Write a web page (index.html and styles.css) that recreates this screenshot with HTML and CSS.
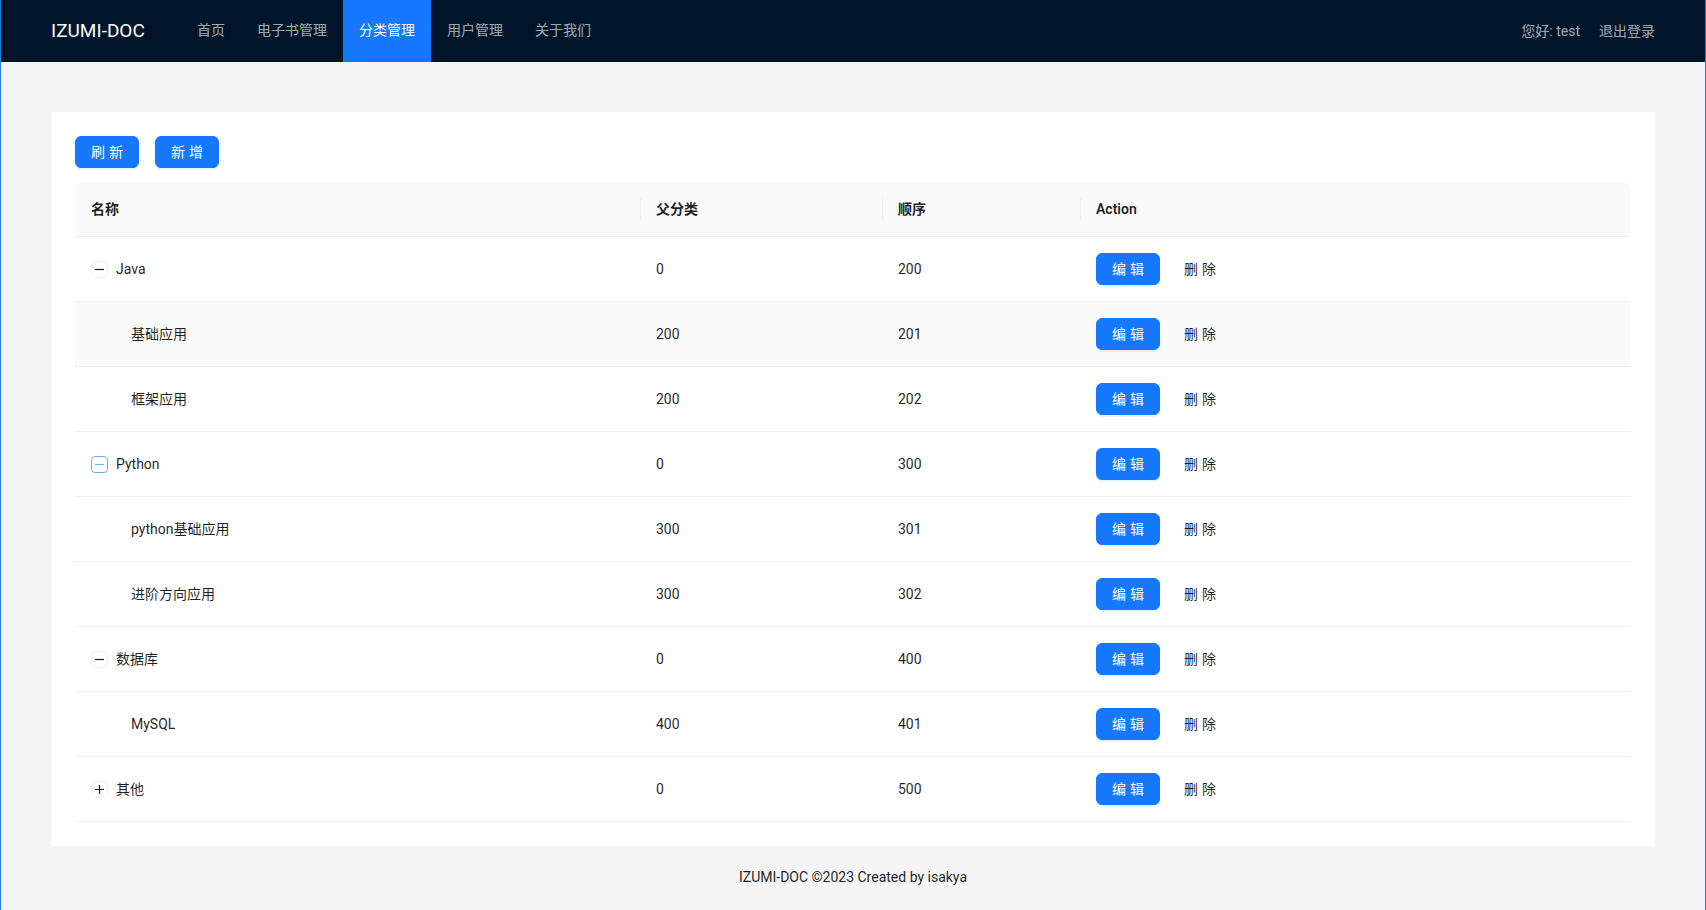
FILE: index.html
```html
<!DOCTYPE html>
<html lang="zh-CN">
<head>
<meta charset="utf-8">
<title>IZUMI-DOC</title>
<link rel="stylesheet" href="styles.css">
</head>
<body>
<div class="app">
  <header class="header">
    <div class="logo">IZUMI-DOC</div>
    <nav class="menu">
      <a class="menu-item">首页</a>
      <a class="menu-item">电子书管理</a>
      <a class="menu-item active">分类管理</a>
      <a class="menu-item">用户管理</a>
      <a class="menu-item">关于我们</a>
    </nav>
    <div class="user">
      <span>您好: test</span>
      <a class="logout">退出登录</a>
    </div>
  </header>

  <main class="content">
    <div class="card">
      <div class="toolbar">
        <button class="btn btn-primary"><span class="two">刷新</span></button>
        <button class="btn btn-primary"><span class="two">新增</span></button>
      </div>
      <table class="table">
        <colgroup>
          <col class="c-name"><col class="c-parent"><col class="c-sort"><col>
        </colgroup>
        <thead>
          <tr><th>名称</th><th class="sep">父分类</th><th class="sep">顺序</th><th class="sep">Action</th></tr>
        </thead>
        <tbody>
          <tr>
            <td><div class="name"><span class="expand"><svg width="15" height="15" viewBox="0 0 15 15"><path d="M3 7.5h9" stroke="currentColor" stroke-width="1.2"/></svg></span>Java</div></td>
            <td>0</td><td>200</td>
            <td><div class="actions"><button class="btn btn-primary"><span class="two">编辑</span></button><button class="btn btn-text"><span class="two">删除</span></button></div></td>
          </tr>
          <tr class="hover">
            <td><div class="name child">基础应用</div></td>
            <td>200</td><td>201</td>
            <td><div class="actions"><button class="btn btn-primary"><span class="two">编辑</span></button><button class="btn btn-text"><span class="two">删除</span></button></div></td>
          </tr>
          <tr>
            <td><div class="name child">框架应用</div></td>
            <td>200</td><td>202</td>
            <td><div class="actions"><button class="btn btn-primary"><span class="two">编辑</span></button><button class="btn btn-text"><span class="two">删除</span></button></div></td>
          </tr>
          <tr>
            <td><div class="name"><span class="expand focus"><svg width="15" height="15" viewBox="0 0 15 15"><path d="M3 7.5h9" stroke="currentColor" stroke-width="1.2"/></svg></span>Python</div></td>
            <td>0</td><td>300</td>
            <td><div class="actions"><button class="btn btn-primary"><span class="two">编辑</span></button><button class="btn btn-text"><span class="two">删除</span></button></div></td>
          </tr>
          <tr>
            <td><div class="name child">python基础应用</div></td>
            <td>300</td><td>301</td>
            <td><div class="actions"><button class="btn btn-primary"><span class="two">编辑</span></button><button class="btn btn-text"><span class="two">删除</span></button></div></td>
          </tr>
          <tr>
            <td><div class="name child">进阶方向应用</div></td>
            <td>300</td><td>302</td>
            <td><div class="actions"><button class="btn btn-primary"><span class="two">编辑</span></button><button class="btn btn-text"><span class="two">删除</span></button></div></td>
          </tr>
          <tr>
            <td><div class="name"><span class="expand"><svg width="15" height="15" viewBox="0 0 15 15"><path d="M3 7.5h9" stroke="currentColor" stroke-width="1.2"/></svg></span>数据库</div></td>
            <td>0</td><td>400</td>
            <td><div class="actions"><button class="btn btn-primary"><span class="two">编辑</span></button><button class="btn btn-text"><span class="two">删除</span></button></div></td>
          </tr>
          <tr>
            <td><div class="name child">MySQL</div></td>
            <td>400</td><td>401</td>
            <td><div class="actions"><button class="btn btn-primary"><span class="two">编辑</span></button><button class="btn btn-text"><span class="two">删除</span></button></div></td>
          </tr>
          <tr>
            <td><div class="name"><span class="expand"><svg width="15" height="15" viewBox="0 0 15 15"><path d="M3 7.5h9M7.5 3v9" stroke="currentColor" stroke-width="1.2"/></svg></span>其他</div></td>
            <td>0</td><td>500</td>
            <td><div class="actions"><button class="btn btn-primary"><span class="two">编辑</span></button><button class="btn btn-text"><span class="two">删除</span></button></div></td>
          </tr>
        </tbody>
      </table>
    </div>
  </main>

  <footer class="footer">IZUMI-DOC ©2023 Created by isakya</footer>
</div>
</body>
</html>
```

FILE: styles.css
```css
* { box-sizing: border-box; }
html, body { margin: 0; padding: 0; }
body {
  font-family: "Segoe UI", Roboto, "Noto Sans CJK SC", sans-serif;
  font-size: 14px;
  line-height: 22px;
  color: rgba(0, 0, 0, 0.88);
  background: #f4f4f4;
}
.app {
  min-height: 910px;
  border-left: 1px solid #1a82d8;
  border-right: 1px solid #1a82d8;
  background: #f4f4f4;
}

/* header */
.header {
  height: 62px;
  background: #001529;
  display: flex;
  align-items: center;
  padding: 0 50px;
}
.logo {
  width: 130px;
  color: #fff;
  font-size: 19px;
  line-height: 60px;
}
.menu { display: flex; height: 62px; }
.menu-item {
  display: block;
  padding: 0 16px 2px;
  line-height: 60px;
  color: rgba(255, 255, 255, 0.65);
  cursor: pointer;
}
.menu-item.active { background: #1677ff; color: #fff; }
.user {
  margin-left: auto;
  display: flex;
  gap: 19px;
  line-height: 60px;
  color: rgba(255, 255, 255, 0.65);
}
.logout { color: rgba(255, 255, 255, 0.65); cursor: pointer; }

/* content */
.content { padding: 50px 50px 0; }
.card {
  background: #fff;
  padding: 24px;
}
.toolbar {
  display: flex;
  gap: 16px;
  margin-bottom: 14px;
}

.btn {
  font-family: inherit;
  font-size: 14px;
  height: 32px;
  padding: 0 15px;
  border: 1px solid transparent;
  border-radius: 6px;
  line-height: 22px;
  cursor: pointer;
  display: inline-flex;
  align-items: center;
  justify-content: center;
}
.btn-primary {
  background: #1677ff;
  border-color: #1677ff;
  color: #fff;
  box-shadow: 0 2px 0 rgba(5, 145, 255, 0.1);
}
.btn-text {
  background: transparent;
  color: rgba(0, 0, 0, 0.88);
}
.two {
  letter-spacing: 4px;
  margin-right: -4px;
}

/* table */
.table {
  width: 100%;
  border-collapse: separate;
  border-spacing: 0;
  table-layout: fixed;
}
.c-name { width: 565px; }
.c-parent { width: 242px; }
.c-sort { width: 198px; }
.table th {
  text-align: left;
  font-weight: 600;
  padding: 16px;
  background: #fafafa;
  border-bottom: 1px solid #f0f0f0;
}
.table th:first-child { border-top-left-radius: 8px; }
.table th:last-child { border-top-right-radius: 8px; }
.table th.sep {
  background: linear-gradient(#f0f0f0, #f0f0f0) left center / 1px 22px no-repeat, #fafafa;
}
.table td {
  padding: 16px;
  border-bottom: 1px solid #f0f0f0;
  vertical-align: middle;
  height: 65px;
}
.table tr.hover td { background: #fafafa; }

.name { display: flex; align-items: center; }
.name.child { padding-left: 40px; }
.expand {
  width: 17px;
  height: 17px;
  border: 1px solid #f0f0f0;
  border-radius: 4px;
  margin-right: 8px;
  display: inline-flex;
  align-items: center;
  justify-content: center;
  color: rgba(0, 0, 0, 0.88);
  background: #fff;
  flex: none;
}
.expand.focus { color: #69b1ff; border-color: #69b1ff; }

.actions { display: flex; gap: 8px; }

/* footer */
.footer {
  text-align: center;
  padding: 20px 50px;
  color: rgba(0, 0, 0, 0.88);
}
```
